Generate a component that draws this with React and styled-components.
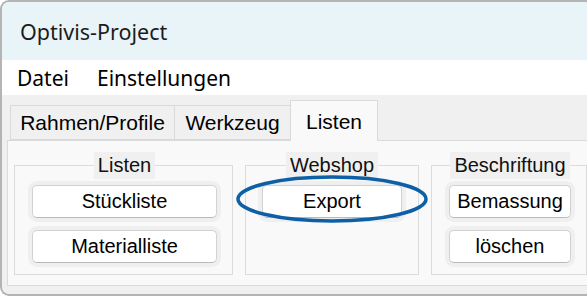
import React from "react";
import styled, { createGlobalStyle } from "styled-components";

const GlobalStyle = createGlobalStyle`
  html, body {
    margin: 0;
    padding: 0;
    background: #ffffff;
    overflow: hidden;
  }
`;

const Window = styled.div`
  width: 620px;
  height: 296px;
  box-sizing: border-box;
  border: 2px solid #b4b4b4;
  border-right: none;
  border-radius: 9px 0 0 9px;
  overflow: hidden;
  display: flex;
  flex-direction: column;
  background: #f0f0f0;
`;

const TitleBar = styled.div`
  height: 58px;
  flex: none;
  background: #e9f4f8;
  display: flex;
  align-items: center;
  padding-left: 18px;
  font-family: "Noto Sans", "Open Sans", sans-serif;
  font-size: 21.5px;
  color: #1c1c1c;
`;

const MenuBar = styled.div`
  height: 35px;
  flex: none;
  background: #ffffff;
  display: flex;
  align-items: center;
  gap: 28px;
  padding-left: 15px;
  font-family: "Noto Sans", "Open Sans", sans-serif;
  font-size: 21px;
  color: #000;
`;

const Body = styled.div`
  flex: 1;
  display: flex;
  flex-direction: column;
  padding: 4px 0 0 5px;
`;

const TabStrip = styled.div`
  display: flex;
  align-items: flex-end;
  height: 41px;
  padding-left: 3px;
  position: relative;
  z-index: 1;
`;

const Tab = styled.div`
  box-sizing: border-box;
  height: ${(p) => (p.$active ? 41 : 35)}px;
  width: ${(p) => p.$w}px;
  margin-bottom: ${(p) => (p.$active ? -1 : 0)}px;
  display: flex;
  align-items: center;
  justify-content: center;
  border: 1px solid #dadada;
  border-bottom: ${(p) => (p.$active ? "none" : "1px solid #dadada")};
  background: ${(p) => (p.$active ? "#f9f9f9" : "#f0f0f0")};
  font-family: "Liberation Sans", Arial, sans-serif;
  font-size: 21px;
  color: #000;
  margin-right: -1px;
  padding-top: ${(p) => (p.$active ? 2 : 0)}px;
`;

const Panel = styled.div`
  box-sizing: border-box;
  height: 146px;
  border: 1px solid #dadada;
  border-right: none;
  background: #f9f9f9;
  display: flex;
  gap: 12px;
  padding: 11px 0 0 6px;
`;

const Group = styled.fieldset`
  box-sizing: border-box;
  width: ${(p) => p.$w}px;
  height: 123px;
  margin: 0;
  flex: none;
  border: 1px solid #dcdcdc;
  padding: 6px ${(p) => p.$pr}px 0 ${(p) => p.$pl}px;
  display: flex;
  flex-direction: column;
  gap: 12px;
  position: relative;
`;

const Legend = styled.legend`
  margin: 0 auto;
  padding: 0 4px;
  height: 27px;
  line-height: 27px;
  background: #f0f0f0;
  font-family: "Liberation Sans", Arial, sans-serif;
  font-size: 20px;
  color: #111;
`;

const Button = styled.button`
  box-sizing: border-box;
  height: 33px;
  width: 100%;
  flex: none;
  border: 1px solid #d2d2d2;
  border-bottom-color: #b9b9b9;
  border-radius: 5px;
  background: #ffffff;
  box-shadow: 0 0 0 4px #efefef;
  font-family: "Liberation Sans", Arial, sans-serif;
  font-size: 20px;
  color: #000;
  padding: 0;
`;

const Highlight = styled.svg`
  position: absolute;
  left: -12px;
  top: -5px;
  overflow: visible;
  pointer-events: none;
`;

export default function App() {
  return (
    <>
      <GlobalStyle />
      <Window>
        <TitleBar>Optivis-Project</TitleBar>
        <MenuBar>
          <span>Datei</span>
          <span>Einstellungen</span>
        </MenuBar>
        <Body>
          <TabStrip>
            <Tab $w={165}>Rahmen/Profile</Tab>
            <Tab $w={117}>Werkzeug</Tab>
            <Tab $w={88} $active>
              Listen
            </Tab>
          </TabStrip>
          <Panel>
            <Group $w={219} $pl={17} $pr={15}>
              <Legend>Listen</Legend>
              <Button>Stückliste</Button>
              <Button>Materialliste</Button>
            </Group>
            <Group $w={174} $pl={16} $pr={16}>
              <Legend>Webshop</Legend>
              <Button>Export</Button>
              <Highlight width="196" height="50">
                <ellipse
                  cx="98"
                  cy="25"
                  rx="94"
                  ry="22"
                  fill="none"
                  stroke="#0d5fa6"
                  strokeWidth="3.5"
                />
              </Highlight>
            </Group>
            <Group $w={156} $pl={17} $pr={15}>
              <Legend>Beschriftung</Legend>
              <Button>Bemassung</Button>
              <Button>löschen</Button>
            </Group>
          </Panel>
        </Body>
      </Window>
    </>
  );
}
